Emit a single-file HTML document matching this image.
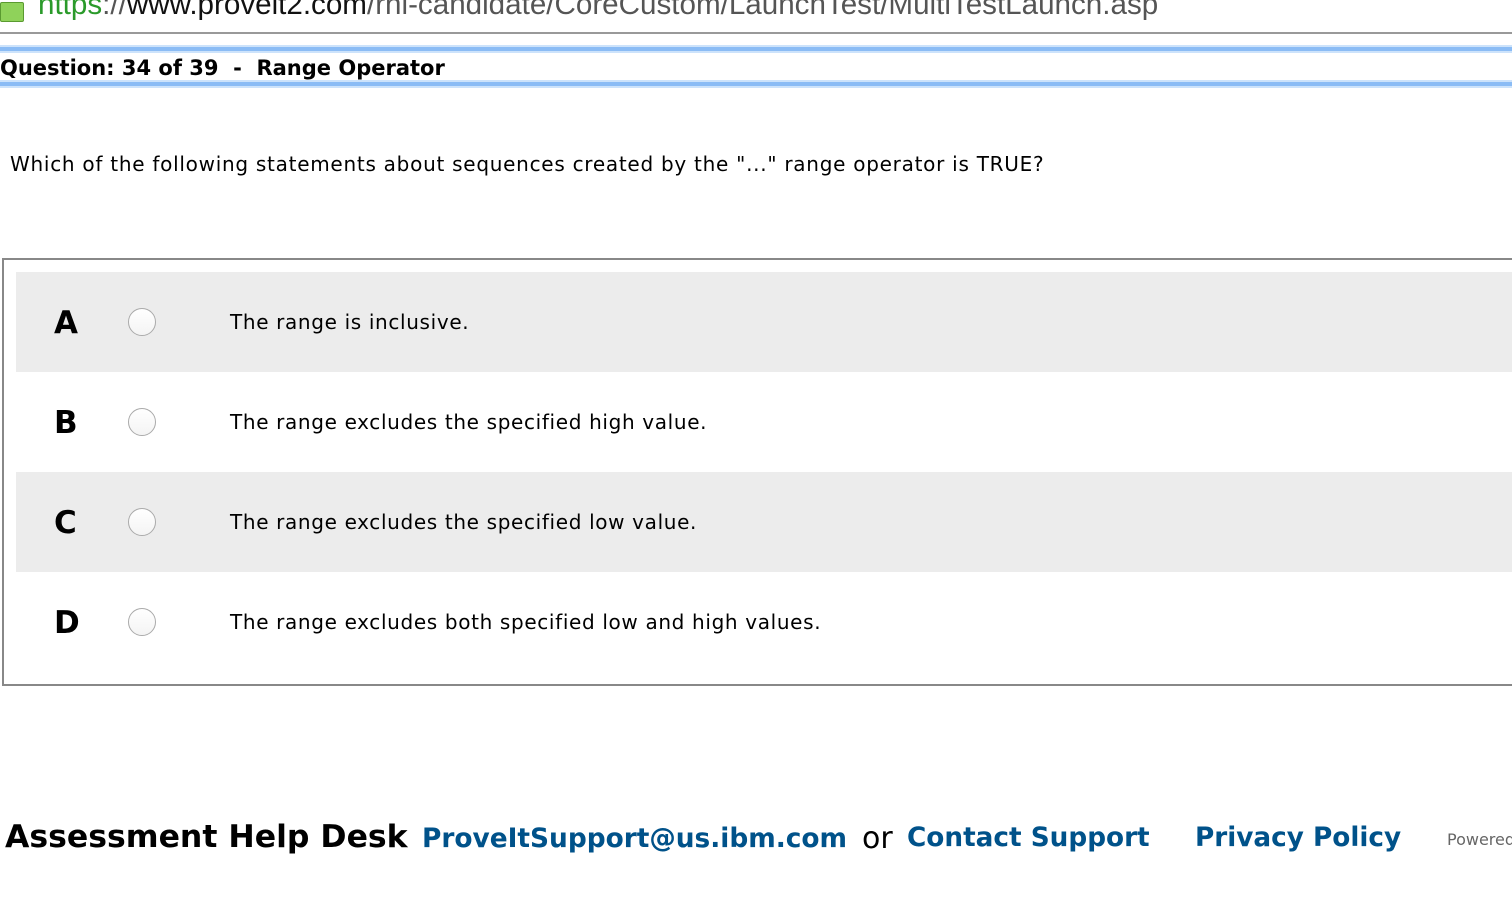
<!DOCTYPE html>
<html><head><style>
body{margin:0;width:1512px;height:904px;overflow:hidden;background:#fff;font-family:"DejaVu Sans",Verdana,sans-serif;position:relative}
.a{position:absolute;white-space:nowrap}
.row{position:absolute;left:16px;width:1496px;height:100px}
.g{background:#ececec}
.L{position:absolute;left:38px;top:33px;font-weight:bold;font-size:31px;color:#000}
.r{position:absolute;left:112px;top:36px;width:26px;height:26px;border-radius:50%;border:1px solid #aaa;background:linear-gradient(#fff,#f4f4f4)}
.t{position:absolute;left:214px;top:38px;font-size:20px;letter-spacing:0.65px;color:#000}
a{color:#00528a;text-decoration:none}
</style></head><body>
<div class="a" style="left:0;top:2px;width:22px;height:18px;background:#8fd25a;border:1px solid #5a9a30;border-radius:2px"></div>
<div class="a" style="left:38px;top:-12px;font-family:'Liberation Sans',sans-serif;font-size:29.6px;color:#555"><span style="color:#2a9a2a">https</span>://<span style="color:#111">www.proveit2.com</span>/rhi-candidate/CoreCustom/LaunchTest/MultiTestLaunch.asp</div>
<div class="a" style="left:0;top:32px;width:1512px;height:2px;background:#999"></div>
<div class="a" style="left:0;top:45px;width:1512px;height:2px;background:#cde3fb"></div>
<div class="a" style="left:0;top:47px;width:1512px;height:4px;background:#8bbcf5"></div>
<div class="a" style="left:0;top:51px;width:1512px;height:2px;background:#cde3fb"></div>
<div class="a" style="left:0;top:56px;font-weight:bold;font-size:21px">Question: 34 of 39&nbsp; -&nbsp; Range Operator</div>
<div class="a" style="left:0;top:80px;width:1512px;height:2px;background:#cde3fb"></div>
<div class="a" style="left:0;top:82px;width:1512px;height:4px;background:#8bbcf5"></div>
<div class="a" style="left:0;top:86px;width:1512px;height:2px;background:#cde3fb"></div>
<div class="a" style="left:10px;top:152px;font-size:20px;letter-spacing:0.73px">Which of the following statements about sequences created by the "..." range operator is TRUE?</div>
<div class="a" style="left:2px;top:258px;width:1520px;height:424px;border:2px solid #888;box-sizing:content-box"></div>
<div class="row g" style="top:272px"><div class="L">A</div><div class="r"></div><div class="t">The range is inclusive.</div></div>
<div class="row" style="top:372px"><div class="L">B</div><div class="r"></div><div class="t">The range excludes the specified high value.</div></div>
<div class="row g" style="top:472px"><div class="L">C</div><div class="r"></div><div class="t">The range excludes the specified low value.</div></div>
<div class="row" style="top:572px"><div class="L">D</div><div class="r"></div><div class="t">The range excludes both specified low and high values.</div></div>
<div class="a" style="left:5px;top:819px;font-weight:bold;font-size:31.5px">Assessment Help Desk</div>
<div class="a" style="left:422px;top:823px;font-weight:bold;font-size:26.4px"><a>ProveItSupport@us.ibm.com</a></div>
<div class="a" style="left:862px;top:821px;font-size:30px">or</div>
<div class="a" style="left:907px;top:823px;font-weight:bold;font-size:26.3px"><a>Contact Support</a></div>
<div class="a" style="left:1195px;top:823px;font-weight:bold;font-size:26.3px"><a>Privacy Policy</a></div>
<div class="a" style="left:1447px;top:830px;font-size:16px;color:#666">Powered</div>
</body></html>
